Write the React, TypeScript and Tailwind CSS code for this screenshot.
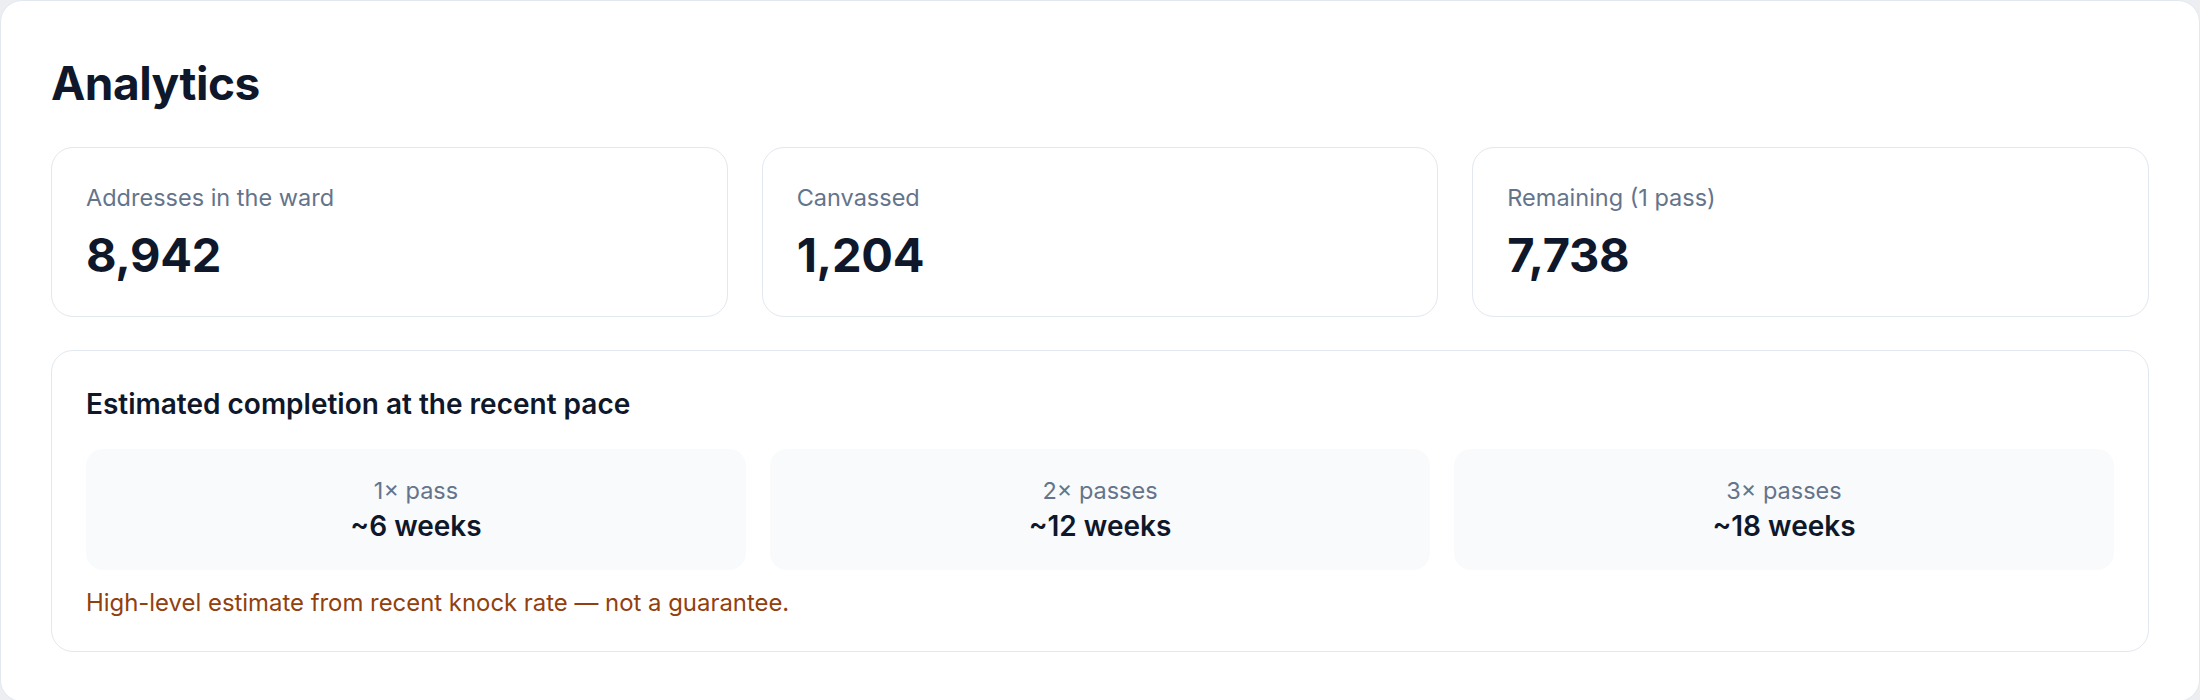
import React from "react";

type Stat = { label: string; value: string };
type Pace = { label: string; value: string };

const stats: Stat[] = [
  { label: "Addresses in the ward", value: "8,942" },
  { label: "Canvassed", value: "1,204" },
  { label: "Remaining (1 pass)", value: "7,738" },
];

const paces: Pace[] = [
  { label: "1× pass", value: "~6 weeks" },
  { label: "2× passes", value: "~12 weeks" },
  { label: "3× passes", value: "~18 weeks" },
];

function StatCard({ label, value }: Stat) {
  return (
    <div className="rounded-[22px] border border-[#e2e8f0] bg-white px-[34px] pt-[33px] pb-[33px]">
      <div className="text-[23.5px] leading-[33.6px] text-[#64748b]">{label}</div>
      <div className="mt-[12px] text-[47px] font-bold leading-[56px] tracking-[-0.3px] text-[#0f172a]">
        {value}
      </div>
    </div>
  );
}

function PaceBox({ label, value }: Pace) {
  return (
    <div className="flex flex-col items-center rounded-[17px] bg-[#f8fafc] px-[22px] pt-[25px] pb-[24px] text-center">
      <div className="text-[23.5px] leading-[33.6px] text-[#64748b]">{label}</div>
      <div className="text-[28px] font-semibold leading-[39.2px] text-[#0f172a]">{value}</div>
    </div>
  );
}

export default function App() {
  return (
    <div
      className="bg-[#eceef1]"
      style={{ fontFamily: "Inter, 'Noto Sans', 'Liberation Sans', sans-serif" }}
    >
      <div className="rounded-[22px] border border-[#e2e8f0] bg-white px-[50px] pt-[54px] pb-[49px]">
        <h1 className="mb-[36px] text-[46px] font-bold leading-[56px] tracking-[-0.5px] text-[#0f172a]">
          Analytics
        </h1>

        <div className="grid grid-cols-3 gap-[34px]">
          {stats.map((s) => (
            <StatCard key={s.label} {...s} />
          ))}
        </div>

        <div className="mt-[33px] rounded-[22px] border border-[#e2e8f0] bg-white px-[34px] pt-[35px] pb-[31px]">
          <h2 className="text-[28px] font-semibold leading-[36px] text-[#0f172a]">
            Estimated completion at the recent pace
          </h2>
          <div className="mt-[27px] grid grid-cols-3 gap-[24px]">
            {paces.map((p) => (
              <PaceBox key={p.label} {...p} />
            ))}
          </div>
          <p className="mt-[16px] text-[23.9px] leading-[33.6px] text-[#92400e]">
            High-level estimate from recent knock rate — not a guarantee.
          </p>
        </div>
      </div>
    </div>
  );
}
